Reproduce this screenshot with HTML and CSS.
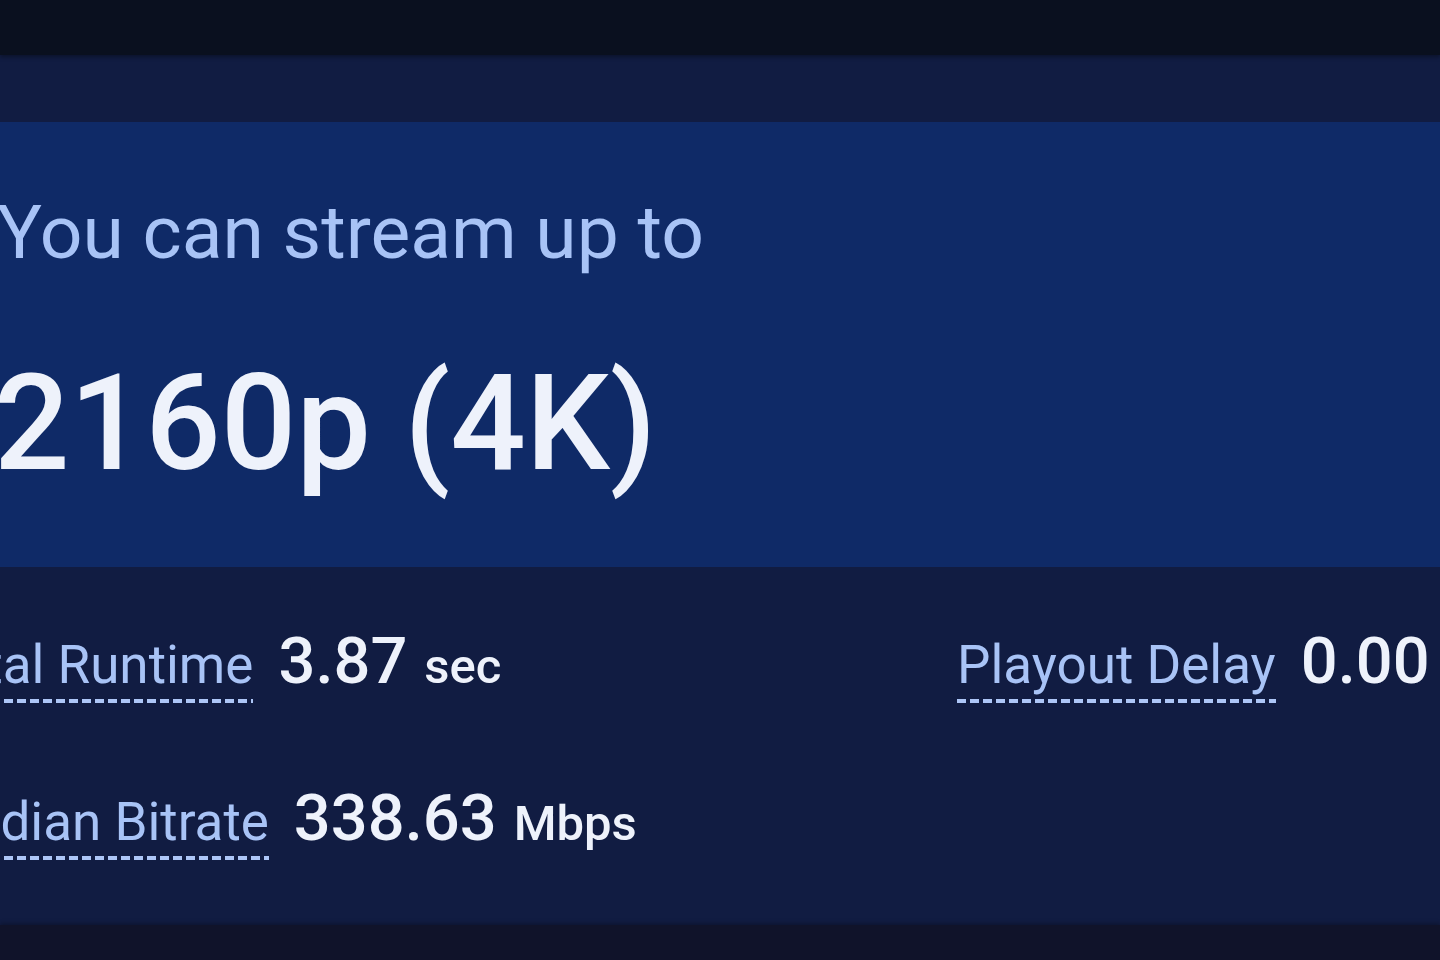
FILE: index.html
```html
<!DOCTYPE html>
<html lang="en">
<head>
<meta charset="utf-8">
<title>Stream quality result</title>
<link rel="stylesheet" href="styles.css">
</head>
<body>
  <div class="topbar"></div>
  <main class="card">
    <div class="card-head"></div>
    <section class="hero">
      <p class="hero-kicker">You can stream up to</p>
      <p class="hero-value">2160p (4K)</p>
    </section>
    <section class="stats">
      <div class="stat">
        <span class="stat-label">Total Runtime</span>
        <span class="stat-value">3.87<small class="stat-unit">sec</small></span>
      </div>
      <div class="stat">
        <span class="stat-label">Playout Delay</span>
        <span class="stat-value">0.00<small class="stat-unit">sec</small></span>
      </div>
      <div class="stat">
        <span class="stat-label">Median Bitrate</span>
        <span class="stat-value">338.63<small class="stat-unit">Mbps</small></span>
      </div>
    </section>
  </main>
  <div class="bottombar"></div>
</body>
</html>
```

FILE: styles.css
```css
html, body {
  margin: 0;
  padding: 0;
  width: 1440px;
  height: 960px;
  overflow: hidden;
  background: #10132a;
  font-family: Roboto, "Noto Sans", "Liberation Sans", sans-serif;
}

.topbar {
  height: 55px;
  background: #0a101f;
  box-shadow: 0 2px 4px rgba(0, 0, 0, 0.35);
  position: relative;
  z-index: 1;
}

.card {
  display: flex;
  flex-direction: column;
  background: #111c42;
}

.card-head {
  height: 67px;
  background: #111c42;
}

.hero {
  background: #0f2a67;
  padding: 73px 0 77px 0;
  display: flex;
  flex-direction: column;
  gap: 87px;
}

.hero p {
  margin: 0;
  line-height: 1;
  white-space: nowrap;
}

.hero-kicker {
  font-size: 75px;
  font-weight: 400;
  color: #a8c3f6;
  margin-left: -3px !important;
}

.hero-value {
  font-size: 133px;
  font-weight: 500;
  color: #eef2fb;
  margin-left: -6px !important;
}

.stats {
  box-sizing: border-box;
  display: grid;
  grid-template-columns: 1031px 1fr;
  row-gap: 83px;
  padding: 62px 0 0 0;
  margin-left: -74px;
  height: 358px;
  align-content: start;
}

.stat {
  display: flex;
  align-items: baseline;
  gap: 25px;
  white-space: nowrap;
}

.stat-label {
  font-size: 53px;
  line-height: 1;
  font-weight: 400;
  color: #a8c3f6;
  padding-bottom: 11px;
  background-image: repeating-linear-gradient(to right, #adc6f7 0 9px, transparent 9px 13px);
  background-repeat: no-repeat;
  background-position: left bottom;
  background-size: 100% 4px;
}

.stat-value {
  font-size: 65px;
  line-height: 1;
  font-weight: 500;
  color: #eef2fb;
}

.stat-unit {
  font-size: 49px;
  font-weight: 500;
  margin-left: 17px;
}

.bottombar {
  height: 35px;
  background: #10132a;
  box-shadow: 0 -2px 4px rgba(0, 0, 0, 0.25);
}
```
